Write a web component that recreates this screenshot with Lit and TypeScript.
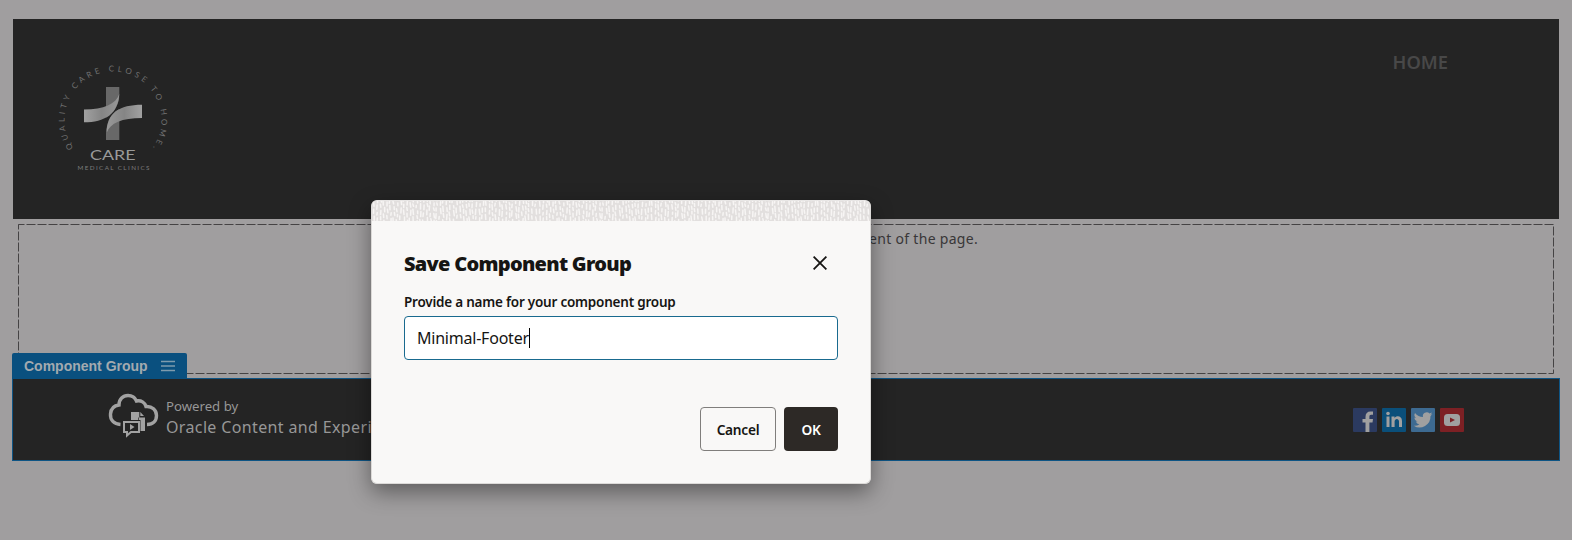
import { LitElement, html, css, svg } from "lit";
import { customElement } from "lit/decorators.js";

const RING = "QUALITY CARE CLOSE TO HOME.";

function strokes() {
  let seed = 7;
  const rnd = () => (seed = (seed * 16807) % 2147483647) / 2147483647;
  let d = "";
  for (let x = 1; x < 166; x += 3.3) {
    let y = -rnd() * 6;
    while (y < 20) {
      const l = 2 + rnd() * 3.5;
      const o = x + rnd() * 1.8;
      d += `M${o.toFixed(1)} ${y.toFixed(1)}l${(0.7 - rnd() * 1.1).toFixed(1)} ${l.toFixed(1)}`;
      y += l + 2 + rnd() * 1.5;
    }
  }
  return d;
}

@customElement("app-root")
export class AppRoot extends LitElement {
  static styles = css`
    :host { display: block; height: 540px; position: relative; overflow: hidden; background: #a09e9f; font-family: "Noto Sans", sans-serif; box-sizing: border-box; padding: 19px 12px 0; }
    * { box-sizing: border-box; }
    .header { margin: 0 1px; height: 200px; background: #242424; display: flex; justify-content: space-between; padding: 31px 111px 0 37px; }
    .logo { display: block; width: 126px; height: 140px; }
    .home { font: 600 18.3px/24px "Noto Sans", sans-serif; color: #484848; height: 24px; white-space: nowrap; }
    .slot { height: 159px; padding: 5px 6px 0; }
    .drop { height: 150px; position: relative; text-align: right; padding: 6px 576px 0 0; font: 14px/17px "Noto Sans", sans-serif; letter-spacing: .3px; color: #393738; white-space: nowrap; }
    .dash { position: absolute; inset: 0; width: 100%; height: 100%; }
    .footer { height: 83px; border: 1px solid #0e5484; background: #242424; position: relative; display: flex; justify-content: space-between; padding: 14px 95px 0 94px; }
    .tab { position: absolute; left: -1px; top: -26px; width: 175px; height: 26px; border-radius: 2px 2px 0 0; background: #0a507f; display: flex; align-items: center; padding-left: 12px; gap: 13px; font: bold 14px/26px "Liberation Sans", sans-serif; color: #a3aaaf; white-space: nowrap; }
    .brand { display: flex; gap: 7px; color: #979797; }
    .words { padding-top: 3px; white-space: nowrap; }
    .p1 { font-size: 13.2px; line-height: 20px; }
    .p2 { font-size: 16px; line-height: 22px; letter-spacing: .36px; }
    .social { display: flex; gap: 5px; padding-top: 15px; }
    .social svg { display: block; width: 24px; height: 24px; }
    .dialog { position: absolute; left: 371px; top: 200px; width: 500px; height: 284px; border-radius: 6px; background: #f9f8f7; overflow: hidden; border: 1px solid #dcdad8; border-top-color: #e8e6e5; }
    .shadow { position: absolute; left: 371px; top: 200px; width: 500px; height: 284px; border-radius: 6px; box-shadow: 0 8px 22px rgba(0,0,0,.42); }
    .band { display: block; width: 100%; height: 20px; }
    .body { padding: 28px 32px 0; color: #161513; }
    .row { display: flex; justify-content: space-between; align-items: center; height: 30px; padding-right: 11px; }
    .row svg { position: relative; top: -1px; }
    .title { font: 900 20px/30px "Noto Sans", sans-serif; letter-spacing: -.72px; white-space: nowrap; }
    .label { font: 600 13.5px/20px "Noto Sans", sans-serif; letter-spacing: -.22px; margin-top: 13px; height: 20px; white-space: nowrap; }
    .input { height: 44px; margin-top: 4px; border: 1px solid #196a8f; border-radius: 4px; background: #fff; padding: 0 12px; display: flex; align-items: center; font-size: 16px; letter-spacing: -.22px; }
    .caret { width: 1px; height: 20px; background: #000; }
    .actions { display: flex; justify-content: flex-end; gap: 8px; margin-top: 47px; }
    .btn { height: 44px; border-radius: 4px; display: flex; align-items: center; justify-content: center; font-weight: 600; font-size: 13.7px; letter-spacing: -.25px; white-space: nowrap; }
    .cancel { width: 76px; border: 1px solid #807e7c; }
    .ok { width: 54px; background: #2d2926; color: #fff; }
  `;

  logo() {
    return html`<svg class="logo" viewBox="50 50 126 140">
      <defs>
        <linearGradient id="a"><stop offset="0" stop-color="#a1a1a1"/><stop offset=".5" stop-color="#858585"/><stop offset="1" stop-color="#999"/></linearGradient>
        <linearGradient id="b"><stop offset="0" stop-color="#999"/><stop offset=".5" stop-color="#858585"/><stop offset="1" stop-color="#a1a1a1"/></linearGradient>
        <path id="ring" d="M73.300 147.800A48.500 48.500 0 1 1 152 148.800"/>
      </defs>
      <path fill="#686868" d="M106 87h13.300v53H106z"/>
      <path fill="#242424" d="M119.800 94C118 114 105 122.300 84 122.300H105.500V133H106.300C107 113 119 104.800 142 104.800H119.800z"/>
      <path fill="url(#a)" d="M84 109.500C104 109.500 116 104 119.300 94C118 114 105 122.300 84 122.300z"/>
      <path fill="url(#b)" d="M142 104.800C119 104.800 107 113 106.600 133C110 123 122 118 142 118z"/>
      ${svg`<text font-family="Lato" font-size="8" fill="#707070"><textPath href="#ring" textLength="211" lengthAdjust="spacing">${RING}</textPath></text>`}
      <text x="90" y="160.300" textLength="45.500" lengthAdjust="spacingAndGlyphs" font-family="Lato" font-size="14.300" fill="#9a9a9a">CARE</text>
      <text x="77.500" y="170" textLength="72" font-family="Lato" font-size="6.300" fill="#7c7c7c">MEDICAL CLINICS</text>
    </svg>`;
  }

  render() {
    return html`
      <div class="header">${this.logo()}<div class="home">HOME</div></div>
      <div class="slot"><div class="drop">
        <svg class="dash"><rect x=".5" y=".5" width="1535" height="149" fill="none" stroke="#454344" stroke-dasharray="9 2" stroke-dashoffset="3"/></svg>
        This is the main content of the page.</div></div>
      <div class="footer">
        <div class="tab"><span>Component Group</span>
          <svg width="14" height="12" viewBox="0 0 14 12" fill="none" stroke="#7e9bad" stroke-width="1.700"><path d="M0 1.500h14M0 6h14M0 10.500h14"/></svg></div>
        <div class="brand">
          <svg width="52" height="46" viewBox="107 393 52 46">
            <path fill="none" stroke="#a2a2a2" stroke-width="3.400" d="M120.500 424.500C114 424 110 420 110.500 414C111 408.500 114 405.500 119 405C119 399 123 395.500 128 395.500C132 395.500 135 397.500 136.500 401C141 400 145 402.500 146 406.500C152 406 156.500 410 156.500 415.500C156.500 421 153 424.500 147 424.500"/>
            <path fill="#a2a2a2" d="M131 412h8.300v5.500h-1v2.500h-7.300zM140.300 412l3.700 4h-3.700zM139 417.500h6v13.500h-4.500v-11h-1.500z"/>
            <path fill="#242424" stroke="#a2a2a2" stroke-width="2" d="M124 422h15v10h-8l-4 3.500v-3.500h-3z"/>
            <path fill="#a2a2a2" d="M130 424l4.500 3-4.500 3z"/>
          </svg>
          <div class="words"><div class="p1">Powered by</div><div class="p2">Oracle Content and Experience</div></div>
        </div>
        <div class="social">
          <svg viewBox="0 0 24 24"><rect width="24" height="24" rx="1" fill="#2b3a60"/><path fill="#a0a0a0" d="M12.500 24v-9.500H9.500v-3.400h3V9c0-3.600 1.800-5.500 5-5.500h2.500v3.300h-1.700c-1.600 0-1.900.8-1.900 2v2.300h3.600l-.5 3.400h-3.100V24z"/></svg>
          <svg viewBox="0 0 24 24"><rect width="24" height="24" rx="1" fill="#0a4f7a"/><path fill="#a0a0a0" d="M4.500 8.500h3v10.500h-3zM9.500 8.500h3V10c1.800-2.800 7.500-2.500 7.500 3v6h-3v-5.500c0-3.500-4.400-3.300-4.400 0V19H9.500z"/><circle cx="6" cy="5.500" r="1.800" fill="#a0a0a0"/></svg>
          <svg viewBox="0 0 24 24"><rect width="24" height="24" rx="1" fill="#3d6a91"/><path fill="#a0a0a0" transform="translate(2.700 2.500) scale(.78)" d="M24 4.600a10 10 0 0 1-2.800.8 5 5 0 0 0 2.200-2.700c-1 .6-2 1-3.100 1.200a4.900 4.900 0 0 0-8.400 4.500A14 14 0 0 1 1.700 3.200a4.900 4.900 0 0 0 1.500 6.500 5 5 0 0 1-2.200-.6 4.900 4.900 0 0 0 4 4.900 5 5 0 0 1-2.300.1 4.900 4.900 0 0 0 4.600 3.400A10 10 0 0 1 0 19.500 14 14 0 0 0 21.500 7.100 10 10 0 0 0 24 4.600z"/></svg>
          <svg viewBox="0 0 24 24"><rect width="24" height="24" rx="1" fill="#7d2024"/><rect x="4" y="6" width="16" height="12" rx="3.500" fill="#a0a0a0"/><path fill="#7d2024" d="M10 9.500l5 2.500-5 2.500z"/></svg>
        </div>
      </div>
      <div class="shadow"></div>
      <div class="dialog">
        <svg class="band"><defs><pattern id="p" width="166" height="20" patternUnits="userSpaceOnUse"><path d="${strokes()}" stroke="#f7f5f4" stroke-width="1.500" stroke-linecap="round"/></pattern></defs><rect width="500" height="20" fill="#e2dfde"/><rect width="500" height="20" fill="url(#p)"/></svg>
        <div class="body">
          <div class="row"><div class="title">Save Component Group</div>
            <svg width="14" height="14" viewBox="0 0 14 14" fill="none" stroke="#161513" stroke-width="1.800"><path d="M.6.6l12.800 12.800M13.400.6L.6 13.400"/></svg></div>
          <div class="label">Provide a name for your component group</div>
          <div class="input"><span>Minimal-Footer</span><span class="caret"></span></div>
          <div class="actions"><div class="btn cancel">Cancel</div><div class="btn ok">OK</div></div>
        </div>
      </div>`;
  }
}
